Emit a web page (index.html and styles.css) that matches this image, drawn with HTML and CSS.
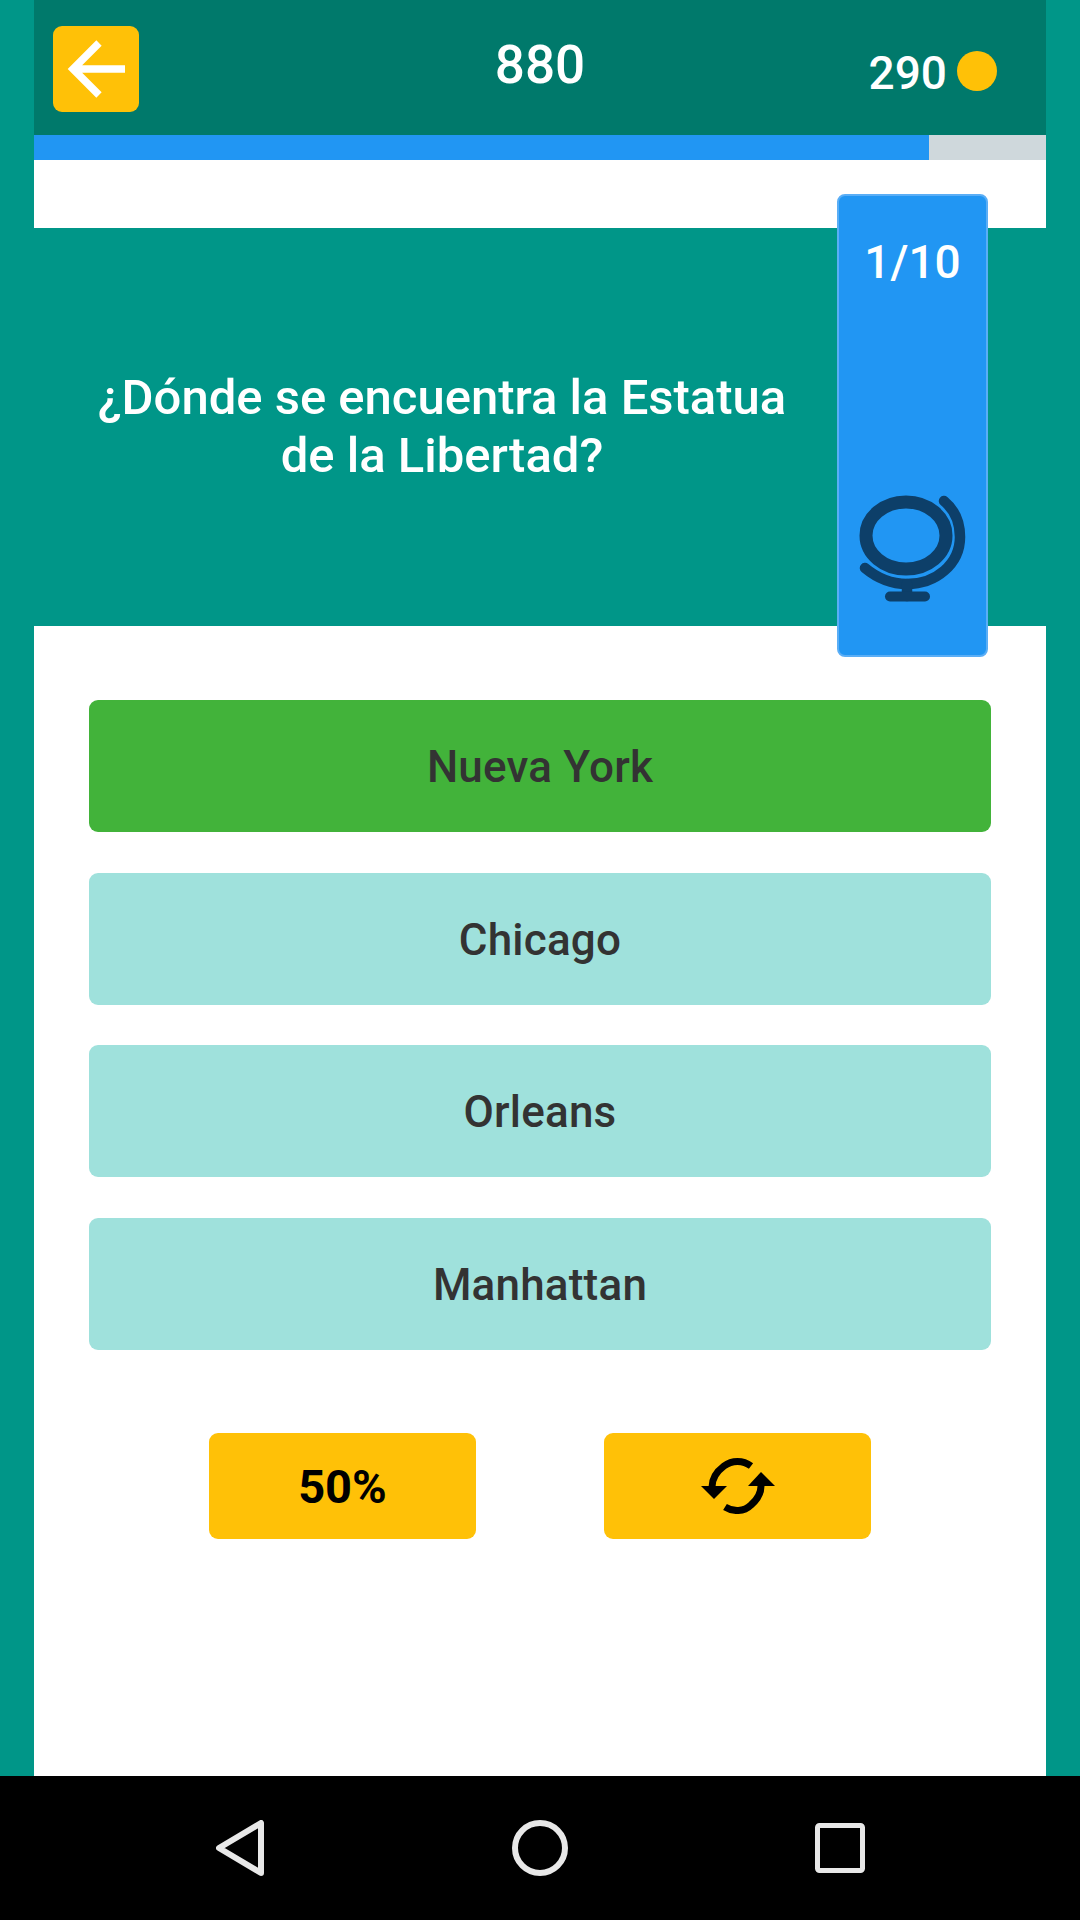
FILE: index.html
```html
<!DOCTYPE html>
<html lang="es">
<head>
<meta charset="utf-8">
<title>Quiz</title>
<link rel="stylesheet" href="styles.css">
</head>
<body>
<main class="screen">
  <header class="topbar">
    <a class="back" href="#" aria-label="Volver">
      <svg class="back-icon" viewBox="0 0 86 86"><path d="M46 17L20 43L46 69M20 43H72"/></svg>
    </a>
    <div class="score">880</div>
    <div class="coins"><span>290</span><i class="coin"></i></div>
  </header>
  <div class="progress"><div class="progress-fill" style="width:88.4%"></div></div>
  <section class="question">
    <h1>¿Dónde se encuentra la Estatua de la Libertad?</h1>
    <aside class="badge">
      <div class="count">1/10</div>
      <svg class="globe" viewBox="0 0 115 118">
        <ellipse cx="51" cy="45.500" rx="40" ry="33.500" class="globe-ring"/>
        <path class="globe-line" d="M89 11C100 20 105 33 105 47C105 74 81 94 52 94C36 94 22 88 10 78"/>
        <path class="globe-line" d="M52 94V106"/>
        <path class="globe-line base" d="M35 106.500H70"/>
      </svg>
    </aside>
  </section>
  <section class="answers">
    <button class="answer correct">Nueva York</button>
    <button class="answer">Chicago</button>
    <button class="answer">Orleans</button>
    <button class="answer">Manhattan</button>
    <div class="tools">
      <button class="tool">50%</button>
      <button class="tool" aria-label="Cambiar">
        <svg class="swap" viewBox="0 0 74 56">
          <path class="swap-line" d="M50 8C42 2 31 2 23 8C15 14 11 21 11 29"/>
          <path d="M0 28H26L13 41Z"/>
          <path class="swap-line" d="M24 49C32 54 43 54 50 47C57 41 60 35 60 28"/>
          <path d="M47 28H74L60 14Z"/>
        </svg>
      </button>
    </div>
  </section>
</main>
<nav class="navbar">
  <svg class="nav-icon nav-back" viewBox="0 0 48 56"><path d="M45 3V53L3 28Z"/></svg>
  <svg class="nav-icon nav-home" viewBox="0 0 56 56"><circle cx="28" cy="28" r="25"/></svg>
  <svg class="nav-icon nav-recent" viewBox="0 0 50 50"><rect x="2.5" y="2.5" width="45" height="45" rx="2"/></svg>
</nav>
</body>
</html>
```

FILE: styles.css
```css
* { box-sizing: border-box; }
html, body { margin: 0; height: 100%; }
body {
  width: 1080px;
  height: 1920px;
  display: flex;
  flex-direction: column;
  background: #009688;
  font-family: Roboto, "Noto Sans", sans-serif;
  overflow: hidden;
}
.screen {
  flex: 1;
  margin: 0 34px;
  background: #fff;
  display: flex;
  flex-direction: column;
}
.topbar {
  height: 135px;
  background: #00796b;
  display: grid;
  grid-template-columns: 1fr auto 1fr;
  align-items: start;
  padding: 26px 19px 0;
  color: #fff;
}
.back {
  width: 86px;
  height: 86px;
  background: #ffc107;
  border-radius: 9px;
  display: block;
}
.back-icon { width: 86px; height: 86px; display: block; }
.back-icon path { fill: none; stroke: #fff; stroke-width: 7.5; }
.score {
  font-size: 53px;
  font-weight: 500;
  line-height: 58px;
  margin-top: 10px;
}
.coins {
  justify-self: end;
  display: flex;
  align-items: center;
  gap: 10px;
  font-size: 46px;
  font-weight: 500;
  line-height: 50px;
  margin: 20px 30px 0 0;
}
.coins span { position: relative; top: 2px; }
.coin {
  width: 40px;
  height: 40px;
  border-radius: 50%;
  background: #ffc107;
}
.progress { height: 25px; background: #cfd8dc; }
.progress-fill { height: 100%; background: #2196f3; }
.question {
  position: relative;
  height: 398px;
  margin: 68px -34px 0;
  padding: 0 278px 0 82px;
  background: #009688;
  display: flex;
  align-items: center;
  justify-content: center;
}
.question h1 {
  margin: 0;
  color: #fff;
  font-size: 49px;
  font-weight: 500;
  line-height: 58px;
  text-align: center;
}
.badge {
  position: absolute;
  top: -34px;
  bottom: -31px;
  right: 92px;
  width: 151px;
  background: #2196f3;
  border: 2px solid #5aaef6;
  border-radius: 8px;
  display: flex;
  flex-direction: column;
  align-items: center;
  justify-content: space-between;
  padding: 39px 0 47px;
  color: #fff;
}
.count { font-size: 46px; font-weight: 500; line-height: 54px; }
.globe { width: 115px; height: 118px; }
.globe-ring { fill: none; stroke: #0d3f69; stroke-width: 13; }
.globe-line {
  fill: none;
  stroke: #0d3f69;
  stroke-width: 10.5;
  stroke-linecap: round;
}
.globe-line.base { stroke-width: 10; }
.answers {
  flex: 1;
  display: flex;
  flex-direction: column;
  gap: 40.5px;
  padding: 74px 55px 0;
}
.answer {
  height: 132px;
  padding: 2px 0 0;
  border: 0;
  border-radius: 9px;
  background: #9fe1dc;
  color: #333;
  font: 500 44px Roboto, "Noto Sans", sans-serif;
  letter-spacing: 0.2px;
}
.answer.correct { background: #42b33a; }
.tools {
  display: flex;
  justify-content: center;
  gap: 128px;
  margin-top: 43px;
}
.tool {
  width: 267px;
  height: 106px;
  border: 0;
  border-radius: 9px;
  background: #ffc107;
  color: #000;
  font: 700 47px Roboto, "Noto Sans", sans-serif;
  display: flex;
  align-items: center;
  justify-content: center;
  padding: 0;
}
.swap { width: 74px; height: 56px; fill: #000; }
.swap-line { fill: none; stroke: #000; stroke-width: 7; }
.navbar {
  height: 144px;
  background: #000;
  display: flex;
  align-items: center;
  justify-content: center;
}
.nav-icon { fill: none; stroke: #e8e8e8; stroke-width: 6; stroke-linejoin: round; }
.nav-back { width: 48px; height: 56px; }
.nav-home { width: 56px; height: 56px; margin: 0 247px 0 248px; }
.nav-recent { width: 50px; height: 50px; stroke-width: 5; }
```
